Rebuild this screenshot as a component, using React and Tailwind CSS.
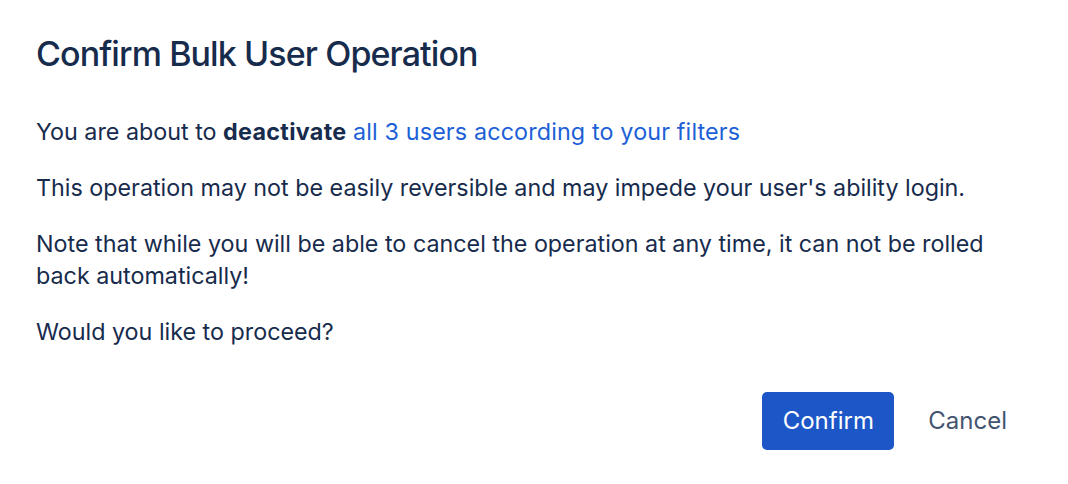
export default function App() {
  return (
    <div className="w-[1068px] h-[484px] bg-white text-[#172B4D]" style={{ fontFamily: 'Inter, "Noto Sans", sans-serif' }}>
      <div className="px-9 pt-[34px]">
        <h1 className="text-[34px] leading-[40px] font-medium tracking-[-0.9px] text-[#172B4D]">Confirm Bulk User Operation</h1>
        <div className="mt-[42px] text-[23.3px] leading-[32px] flex flex-col gap-[24px]">
          <p>
            You are about to <b className="font-bold tracking-[0.3px]">deactivate</b>{' '}
            <a className="text-[#1D5FD6] tracking-[0.15px]">all 3 users according to your filters</a>
          </p>
          <p>This operation may not be easily reversible and may impede your user's ability login.</p>
          <p className="w-[980px]">Note that while you will be able to cancel the operation at any time, it can not be rolled back automatically!</p>
          <p>Would you like to proceed?</p>
        </div>
        <div className="mt-[44px] flex justify-end items-center gap-[9px]">
          <button className="h-[58px] w-[132px] rounded-[5px] bg-[#1D56C7] text-white text-[24px]">Confirm</button>
          <button className="h-[58px] px-[25px] text-[24px] text-[#44546F]">Cancel</button>
        </div>
      </div>
    </div>
  );
}
